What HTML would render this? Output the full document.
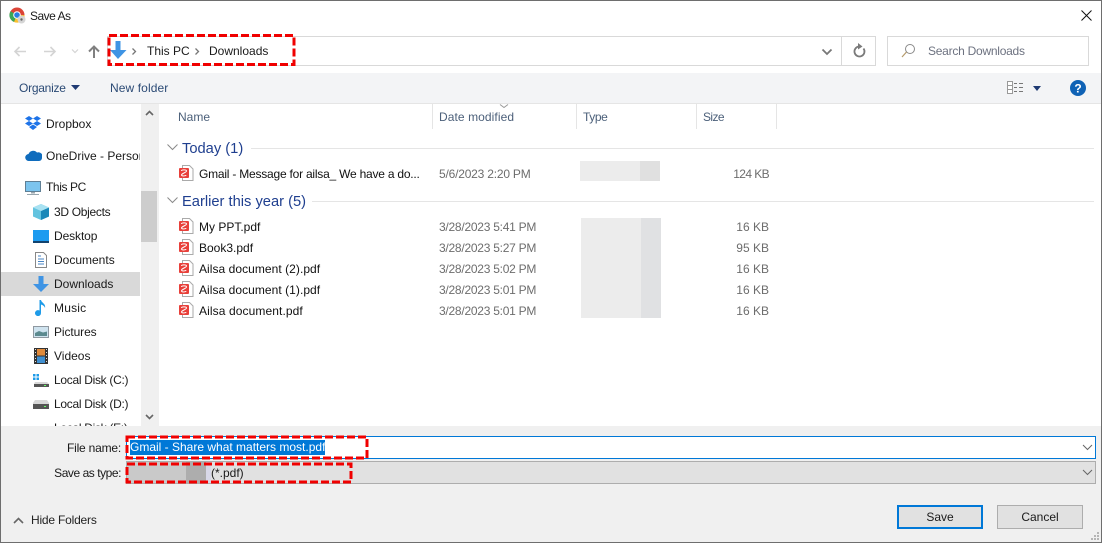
<!DOCTYPE html>
<html><head><meta charset="utf-8"><style>
html,body{margin:0;padding:0;background:#fff}
#w{position:relative;width:1102px;height:543px;overflow:hidden;background:#fff;font:12px/16px "Liberation Sans",sans-serif;color:#1a1a1a}
#w div,#w svg{position:absolute}
.t{white-space:nowrap;height:16px}
.h{color:#4c607a}
.d{color:#6d6d6d;left:439px;letter-spacing:-.25px}
.s{color:#6d6d6d;right:333px}
.f{left:199px;color:#111}
.g{color:#1f3f8f;font-size:14.7px;line-height:18px;height:18px}
.v{background:#e5e5e5;width:1px;height:25px;top:104px}
</style></head><body><div id="w">
<div style="left:0;top:0;width:1102px;height:1px;background:#6e6e6e"></div>
<div style="left:0;top:0;width:1px;height:543px;background:#6e6e6e"></div>
<div style="left:1101px;top:0;width:1px;height:543px;background:#6e6e6e"></div>
<div style="left:0;top:542px;width:1102px;height:1px;background:#6e6e6e"></div>

<svg style="left:9px;top:7px" width="17" height="17" viewBox="0 0 17 17"><circle cx="8" cy="8" r="7.5" fill="#db4437"/><path d="M8 8 1.500 4.200A7.500 7.500 0 0 0 5 15l3.500-6z" fill="#3aa757"/><path d="M8 8h7.500A7.500 7.500 0 0 1 5 15z" fill="#fbc02d"/><circle cx="8" cy="8" r="3.800" fill="#fff"/><circle cx="8" cy="8" r="2.800" fill="#2a7de1"/><circle cx="12.500" cy="12.500" r="4" fill="#d5d5d5"/><circle cx="12.500" cy="12.500" r="1.200" fill="#666"/></svg>
<div class="t" style="left:30px;top:8px;letter-spacing:-.5px">Save As</div>
<svg style="left:1080px;top:9px" width="13" height="13" viewBox="0 0 13 13"><path d="M1.500 1.500l10 10M11.500 1.500l-10 10" stroke="#111" stroke-width="1" fill="none"/></svg>

<svg style="left:13px;top:44px" width="90" height="16" viewBox="0 0 90 16"><g fill="none" stroke="#d4d4d4" stroke-width="1.600"><path d="M13 7.500H2M6.500 3 2 7.500 6.500 12"/><path d="M31 7.500h11M37.500 3 42 7.500 37.500 12"/><path d="M59 5.500l3 3 3-3" stroke-width="1.200"/></g><path d="M81 14V3M76 7.500l5-5 5 5" fill="none" stroke="#808080" stroke-width="2"/></svg>

<div style="left:107px;top:36px;width:767px;height:28px;border:1px solid #d9d9d9"></div>
<div style="left:841px;top:36px;width:1px;height:29px;background:#d9d9d9"></div>
<svg style="left:110px;top:41px" width="17" height="18" viewBox="0 0 17 18"><path d="M5.500 0h5v9h6l-8.500 9L0 9h5.500z" fill="#3f94e4"/></svg>
<svg style="left:131px;top:47px" width="6" height="9" viewBox="0 0 6 9"><path d="M1.500 1.500l3 3-3 3" fill="none" stroke="#777" stroke-width="1.300"/></svg>
<div class="t" style="left:147px;top:43px">This PC</div>
<svg style="left:194px;top:47px" width="6" height="9" viewBox="0 0 6 9"><path d="M1.500 1.500l3 3-3 3" fill="none" stroke="#777" stroke-width="1.300"/></svg>
<div class="t" style="left:209px;top:43px">Downloads</div>
<svg style="left:821px;top:48px" width="12" height="8" viewBox="0 0 12 8"><path d="M1.500 1.500 6 6l4.500-4.500" fill="none" stroke="#777" stroke-width="1.800"/></svg>
<svg style="left:852px;top:43px" width="14" height="15" viewBox="0 0 14 15"><path d="M11.500 5.500A5 5 0 1 1 7 3.500H9" fill="none" stroke="#7a7a7a" stroke-width="1.800"/><path d="M6 0l4.500 3.500L6 6.500z" fill="#7a7a7a"/></svg>

<div style="left:887px;top:36px;width:200px;height:28px;border:1px solid #d9d9d9"></div>
<svg style="left:901px;top:43px" width="15" height="15" viewBox="0 0 15 15"><circle cx="9" cy="6" r="4.500" fill="none" stroke="#8a8a8a"/><path d="M5.500 9 1 14" stroke="#b59a6a" stroke-width="1.200"/></svg>
<div class="t" style="left:928px;top:43px;color:#6d7280;letter-spacing:-.25px">Search Downloads</div>

<div style="left:1px;top:73px;width:1100px;height:30px;background:#f3f4f6"></div>
<div style="left:1px;top:103px;width:1100px;height:1px;background:#e5e5e5"></div>
<div class="t" style="left:19px;top:80px;color:#2b4a75;letter-spacing:-.25px">Organize</div>
<svg style="left:71px;top:85px" width="9" height="5" viewBox="0 0 9 5"><path d="M0 0h9L4.500 5z" fill="#1f3a73"/></svg>
<div class="t" style="left:110px;top:80px;color:#2b4a75;letter-spacing:.1px">New folder</div>
<svg style="left:1007px;top:81px" width="17" height="13" viewBox="0 0 17 13"><rect x=".5" y=".5" width="5" height="12" fill="#fff" stroke="#999"/><path d="M1 4.500h4M1 8.500h4" stroke="#999"/><path d="M7 2.500h3M12 2.500h4M7 6.500h3M12 6.500h4M7 10.500h3M12 10.500h4" stroke="#777"/></svg>
<svg style="left:1033px;top:86px" width="8" height="5" viewBox="0 0 8 5"><path d="M0 0h8L4 5z" fill="#1f3a73"/></svg>
<svg style="left:1070px;top:80px" width="16" height="16" viewBox="0 0 16 16"><circle cx="8" cy="8" r="8" fill="#0f62b5"/><text x="8" y="12.500" text-anchor="middle" font-family="Liberation Sans" font-weight="bold" font-size="12" fill="#fff">?</text></svg>

<div style="left:141px;top:104px;width:17px;height:322px;background:#f0f0f0"></div>
<div style="left:141px;top:191px;width:16px;height:51px;background:#cdcdcd"></div>
<div style="left:158px;top:104px;width:1px;height:322px;background:#f0f0f0"></div>
<svg style="left:145px;top:110px" width="9" height="6" viewBox="0 0 9 6"><path d="M1 5l3.500-3.500L8 5" fill="none" stroke="#666" stroke-width="1.600"/></svg>
<svg style="left:145px;top:414px" width="9" height="6" viewBox="0 0 9 6"><path d="M1 1l3.500 3.500L8 1" fill="none" stroke="#666" stroke-width="1.600"/></svg>

<div style="left:1px;top:272px;width:139px;height:24px;background:#d9d9d9"></div>

<svg style="left:25px;top:116px" width="16" height="15" viewBox="0 0 16 15" fill="#1e73e8"><path d="M4 0 0 2.500 4 5l4-2.500zM12 0 8 2.500 12 5l4-2.500zM4 5 0 7.500 4 10l4-2.500zM12 5 8 7.500l4 2.500 4-2.500zM4 11l4-2.500 4 2.500-4 3z"/></svg>
<div class="t" style="left:46px;top:116px">Dropbox</div>
<svg style="left:25px;top:149px" width="17" height="12" viewBox="0 0 17 12"><path d="M4 12a3.500 3.500 0 0 1-.5-7A5 5 0 0 1 12 3.500 4 4 0 0 1 17 9a3 3 0 0 1-3 3z" fill="#0f6cbd"/></svg>
<div class="t" style="left:46px;top:148px;width:94px;overflow:hidden">OneDrive - Personal</div>
<svg style="left:25px;top:181px" width="16" height="14" viewBox="0 0 16 14"><rect x=".5" y=".5" width="15" height="10" fill="#7cc4ee" stroke="#5f7f95"/><path d="M6 11h4v1.500H6zM2 13h12v1H2z" fill="#98a6ae"/></svg>
<div class="t" style="left:46px;top:179px;letter-spacing:-.4px">This PC</div>
<svg style="left:33px;top:204px" width="16" height="16" viewBox="0 0 16 16"><path d="M8 0l8 3.500v9L8 16l-8-3.500v-9z" fill="#63c3df"/><path d="M8 7v9l8-3.500v-9z" fill="#1b88b8"/><path d="M0 3.500 8 7l8-3.500L8 0z" fill="#a9e2f2"/></svg>
<div class="t" style="left:54px;top:204px;letter-spacing:-.3px">3D Objects</div>
<svg style="left:33px;top:230px" width="16" height="13" viewBox="0 0 16 13"><rect width="16" height="12" fill="#1c9bf0"/><rect y="11" width="16" height="2" fill="#12426e"/></svg>
<div class="t" style="left:54px;top:228px;letter-spacing:-.1px">Desktop</div>
<svg style="left:35px;top:252px" width="12" height="16" viewBox="0 0 12 16"><path d="M.5.500h8l3 3v12H.500z" fill="#fff" stroke="#888"/><path d="M3 4h3M3 7h6M3 9.500h6M3 12h6" stroke="#4a86c5"/></svg>
<div class="t" style="left:54px;top:252px">Documents</div>
<svg style="left:33px;top:276px" width="16" height="16" viewBox="0 0 16 16"><path d="M5.500 0h5v8H16l-8 8-8-8h5.500z" fill="#3f94e4"/></svg>
<div class="t" style="left:54px;top:276px">Downloads</div>
<svg style="left:35px;top:300px" width="12" height="16" viewBox="0 0 12 16"><path d="M4.500 0h1.500c.5 3 5 3.500 4 8-.5-2-2.500-3-4-3.500V13a3 3 0 1 1-1.500-2.500z" fill="#1e9be8"/></svg>
<div class="t" style="left:54px;top:300px;letter-spacing:.2px">Music</div>
<svg style="left:33px;top:326px" width="16" height="12" viewBox="0 0 16 12"><rect x=".5" y=".5" width="15" height="11" fill="#cfe3ef" stroke="#8f98a0"/><path d="M2 7l4-2 4 1.500 4-1V10H2z" fill="#5c8a8f"/></svg>
<div class="t" style="left:54px;top:324px;letter-spacing:-.1px">Pictures</div>
<svg style="left:34px;top:348px" width="14" height="16" viewBox="0 0 14 16"><rect width="14" height="16" fill="#333"/><rect x="3" y="1" width="8" height="6.500" fill="#e08a3a"/><rect x="3" y="8.500" width="8" height="6.500" fill="#3f8fd0"/><path d="M1 1.500h1M1 4.500h1M1 7.500h1M1 10.500h1M1 13.500h1M12 1.500h1M12 4.500h1M12 7.500h1M12 10.500h1M12 13.500h1" stroke="#ddd"/></svg>
<div class="t" style="left:54px;top:348px">Videos</div>
<svg style="left:33px;top:374px" width="16" height="13" viewBox="0 0 16 13"><path d="M0 0h2.500v2.500H0zM3.500 0H6v2.500H3.500zM0 3.500h2.500V6H0zM3.500 3.500H6V6H3.500z" fill="#1e9be8"/><path d="M2 8h12l2 2v3H1v-3z" fill="#d8d8d8"/><rect x="1" y="10" width="15" height="3" fill="#555"/><rect x="11" y="11" width="2" height="1" fill="#6f6"/></svg>
<div class="t" style="left:54px;top:372px;letter-spacing:-.3px">Local Disk (C:)</div>
<svg style="left:33px;top:400px" width="16" height="9" viewBox="0 0 16 9"><path d="M2 0h12l2 3v6H0V3z" fill="#d8d8d8"/><rect y="4" width="16" height="5" fill="#555"/><rect x="11" y="6" width="2" height="1" fill="#6f6"/></svg>
<div class="t" style="left:54px;top:396px;letter-spacing:-.3px">Local Disk (D:)</div>
<div class="t" style="left:54px;top:420px;letter-spacing:-.3px">Local Disk (E:)</div>

<div class="t h" style="left:178px;top:109px">Name</div>
<div class="v" style="left:432px"></div>
<svg style="left:499px;top:104px" width="10" height="5" viewBox="0 0 10 5"><path d="M1 .500l4 3 4-3" fill="none" stroke="#999"/></svg>
<div class="t h" style="left:439px;top:109px;letter-spacing:.08px">Date modified</div>
<div class="v" style="left:576px"></div>
<div class="t h" style="left:583px;top:109px;letter-spacing:-.4px">Type</div>
<div class="v" style="left:696px"></div>
<div class="t h" style="left:703px;top:109px;letter-spacing:-.6px">Size</div>
<div class="v" style="left:776px"></div>

<svg style="left:167px;top:144px" width="11" height="7" viewBox="0 0 11 7"><path d="M.500.500l5 5 5-5" fill="none" stroke="#8a8a8a"/></svg>
<div class="t g" style="left:182px;top:140px">Today (1)</div>
<div style="left:251px;top:148px;width:843px;height:1px;background:#e5e5e5"></div>
<svg style="left:167px;top:197px" width="11" height="7" viewBox="0 0 11 7"><path d="M.500.500l5 5 5-5" fill="none" stroke="#8a8a8a"/></svg>
<div class="t g" style="left:182px;top:193px">Earlier this year (5)</div>
<div style="left:312px;top:201px;width:782px;height:1px;background:#e5e5e5"></div>

<svg style="left:179px;top:165px" width="15" height="16" viewBox="0 0 15 16"><path d="M3.500.500h7l3.500 3.500v11.500H3.500z" fill="#fff" stroke="#aaa"/><rect y="3" width="10" height="10" rx="1" fill="#e8403a"/><path d="M2.500 6c0-1.500 5-1.500 5 0S2.500 8.500 2.500 10s4.500 1 4.500 0" fill="none" stroke="#fff"/></svg>
<svg style="left:179px;top:218px" width="15" height="16" viewBox="0 0 15 16"><path d="M3.500.500h7l3.500 3.500v11.500H3.500z" fill="#fff" stroke="#aaa"/><rect y="3" width="10" height="10" rx="1" fill="#e8403a"/><path d="M2.500 6c0-1.500 5-1.500 5 0S2.500 8.500 2.500 10s4.500 1 4.500 0" fill="none" stroke="#fff"/></svg>
<svg style="left:179px;top:239px" width="15" height="16" viewBox="0 0 15 16"><path d="M3.500.500h7l3.500 3.500v11.500H3.500z" fill="#fff" stroke="#aaa"/><rect y="3" width="10" height="10" rx="1" fill="#e8403a"/><path d="M2.500 6c0-1.500 5-1.500 5 0S2.500 8.500 2.500 10s4.500 1 4.500 0" fill="none" stroke="#fff"/></svg>
<svg style="left:179px;top:260px" width="15" height="16" viewBox="0 0 15 16"><path d="M3.500.500h7l3.500 3.500v11.500H3.500z" fill="#fff" stroke="#aaa"/><rect y="3" width="10" height="10" rx="1" fill="#e8403a"/><path d="M2.500 6c0-1.500 5-1.500 5 0S2.500 8.500 2.500 10s4.500 1 4.500 0" fill="none" stroke="#fff"/></svg>
<svg style="left:179px;top:281px" width="15" height="16" viewBox="0 0 15 16"><path d="M3.500.500h7l3.500 3.500v11.500H3.500z" fill="#fff" stroke="#aaa"/><rect y="3" width="10" height="10" rx="1" fill="#e8403a"/><path d="M2.500 6c0-1.500 5-1.500 5 0S2.500 8.500 2.500 10s4.500 1 4.500 0" fill="none" stroke="#fff"/></svg>
<svg style="left:179px;top:302px" width="15" height="16" viewBox="0 0 15 16"><path d="M3.500.500h7l3.500 3.500v11.500H3.500z" fill="#fff" stroke="#aaa"/><rect y="3" width="10" height="10" rx="1" fill="#e8403a"/><path d="M2.500 6c0-1.500 5-1.500 5 0S2.500 8.500 2.500 10s4.500 1 4.500 0" fill="none" stroke="#fff"/></svg>

<div class="t f" style="top:166px;letter-spacing:-.22px">Gmail - Message for ailsa_ We have a do...</div>
<div class="t d" style="top:166px;letter-spacing:-.2px">5/6/2023 2:20 PM</div>
<div class="t s" style="top:166px;letter-spacing:-.6px">124 KB</div>
<div style="left:580px;top:161px;width:60px;height:20px;background:#ececec"></div>
<div style="left:640px;top:161px;width:20px;height:20px;background:#e0e0e0"></div>

<div style="left:581px;top:218px;width:60px;height:100px;background:#ececec"></div>
<div style="left:641px;top:218px;width:20px;height:100px;background:#e0e1e3"></div>

<div class="t f" style="top:219px">My PPT.pdf</div><div class="t d" style="top:219px">3/28/2023 5:41 PM</div><div class="t s" style="top:219px">16 KB</div>
<div class="t f" style="top:240px">Book3.pdf</div><div class="t d" style="top:240px">3/28/2023 5:27 PM</div><div class="t s" style="top:240px">95 KB</div>
<div class="t f" style="top:261px;letter-spacing:.05px">Ailsa document (2).pdf</div><div class="t d" style="top:261px">3/28/2023 5:02 PM</div><div class="t s" style="top:261px">16 KB</div>
<div class="t f" style="top:282px;letter-spacing:.05px">Ailsa document (1).pdf</div><div class="t d" style="top:282px">3/28/2023 5:01 PM</div><div class="t s" style="top:282px">16 KB</div>
<div class="t f" style="top:303px;letter-spacing:.1px">Ailsa document.pdf</div><div class="t d" style="top:303px">3/28/2023 5:01 PM</div><div class="t s" style="top:303px">16 KB</div>

<div style="left:1px;top:426px;width:1100px;height:116px;background:#f0f0f0"></div>
<div class="t" style="right:981px;top:440px;letter-spacing:-.2px">File name:</div>
<div class="t" style="right:981px;top:465px;letter-spacing:-.45px">Save as type:</div>
<div style="left:126px;top:436px;width:968px;height:21px;background:#fff;border:1px solid #0078d7"></div>
<div style="left:130px;top:440px;width:195px;height:15px;background:#0078d7"></div>
<div class="t" style="left:130px;top:439px;color:#fff">Gmail - Share what matters most.pdf</div>
<svg style="left:1082px;top:444px" width="11" height="7" viewBox="0 0 11 7"><path d="M1 1l4.500 4.500L10 1" fill="none" stroke="#666"/></svg>
<div style="left:126px;top:461px;width:968px;height:21px;background:#e1e1e1;border:1px solid #adadad"></div>
<div style="left:127px;top:462px;width:59px;height:21px;background:#c9c9c9"></div>
<div style="left:186px;top:462px;width:20px;height:21px;background:#adadad"></div>
<div style="left:206px;top:462px;width:5px;height:21px;background:#d8d8e8"></div>
<div class="t" style="left:211px;top:465px">(*.pdf)</div>
<svg style="left:1082px;top:469px" width="11" height="7" viewBox="0 0 11 7"><path d="M1 1l4.500 4.500L10 1" fill="none" stroke="#666"/></svg>

<svg style="left:0;top:0" width="1102" height="543"><g fill="none" stroke="#f00000" stroke-width="3" stroke-dasharray="8 3"><rect x="109" y="35.500" width="185" height="29"/><rect x="127" y="437" width="240" height="21"/><rect x="127" y="464" width="224" height="18"/></g></svg>

<svg style="left:13px;top:517px" width="11" height="7" viewBox="0 0 11 7"><path d="M1 6l4.500-4.500L10 6" fill="none" stroke="#666" stroke-width="1.600"/></svg>
<div class="t" style="left:31px;top:512px;color:#222;letter-spacing:-.2px">Hide Folders</div>
<div style="left:897px;top:505px;width:82px;height:20px;border:2px solid #0078d7;background:#e1e1e1;text-align:center;line-height:20px">Save</div>
<div style="left:997px;top:505px;width:84px;height:22px;border:1px solid #adadad;background:#e1e1e1;text-align:center;line-height:22px">Cancel</div>
<svg style="left:1090px;top:531px" width="10" height="10" viewBox="0 0 10 10" fill="#b5b5b5"><path d="M7 1h2v2H7zM4 4h2v2H4zM7 4h2v2H7zM1 7h2v2H1zM4 7h2v2H4zM7 7h2v2H7z"/></svg>
</div></body></html>
